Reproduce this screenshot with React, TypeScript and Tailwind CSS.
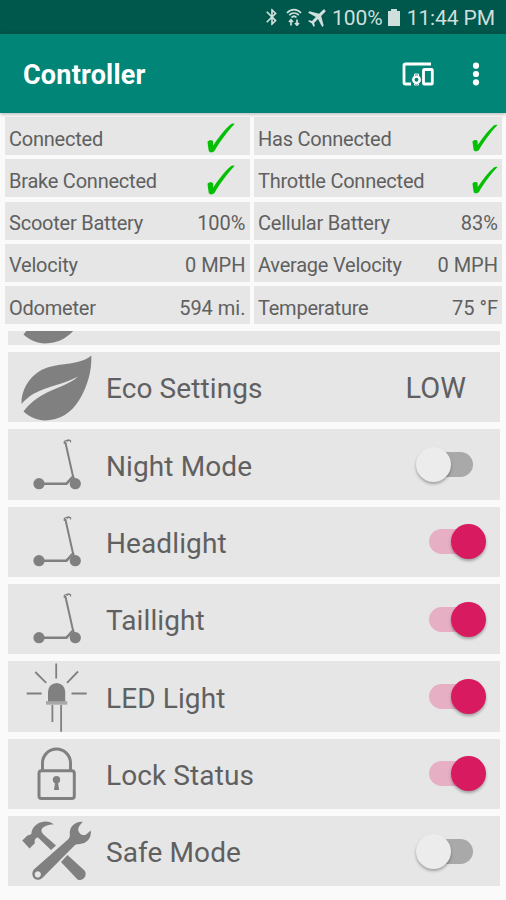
import { clsx } from "clsx";
import { type ReactNode, useState } from "react";
import { MdAirplanemodeActive, MdBluetooth } from "react-icons/md";

const leftStats = [
  { label: "Connected", value: true },
  { label: "Brake Connected", value: true },
  { label: "Scooter Battery", value: "100%" },
  { label: "Velocity", value: "0 MPH" },
  { label: "Odometer", value: "594 mi." },
]

const rightStats = [
  { label: "Has Connected", value: true },
  { label: "Throttle Connected", value: true },
  { label: "Cellular Battery", value: "83%" },
  { label: "Average Velocity", value: "0 MPH" },
  { label: "Temperature", value: "75 °F" },
]

const settings = [
  { name: "Night Mode", icon: <ScooterIcon />, enabled: false },
  { name: "Headlight", icon: <ScooterIcon />, enabled: true },
  { name: "Taillight", icon: <ScooterIcon />, enabled: true },
  { name: "LED Light", icon: <LedIcon />, enabled: true },
  { name: "Lock Status", icon: <LockIcon />, enabled: true },
  { name: "Safe Mode", icon: <ToolsIcon />, enabled: false },
]

function Icon({ children }: { children: ReactNode }) {
  return (
    <svg viewBox="0 0 71 70" className="w-[71px] h-[70px] shrink-0 text-[#808080]" fill="none">
      {children}
    </svg>
  )
}

function LeafIcon() {
  return (
    <Icon>
      <path
        fill="currentColor"
        d="M70.300 3.500C65 8.500 56 10.500 45 12C34 13.500 26 14.500 18 19.500C8 26 0 38 .5 52C4 48 8 44.500 13 41.500C27 34 44 32 57 24.500C49 32 36 35.500 26 40.500C16 45.500 8 52 2.500 59.500C10 66.500 19 69.500 29 68C44 66.500 54 56 60 45C66 34 71 19.500 70.300 3.500Z"
      />
    </Icon>
  )
}

function ScooterIcon() {
  return (
    <Icon>
      <g stroke="currentColor" strokeWidth="2">
        <path d="M18 53.700H45.500L52.500 46" strokeWidth="2.600" />
        <path d="M54 53L51.500 44L44.300 12" strokeWidth="2" />
        <path d="M43.300 14V11.500L46.500 10L49.500 10.500V12.500M46 11.500L48.500 9.500" strokeWidth="1.200" />
      </g>
      <circle cx="18" cy="53.700" r="5.600" fill="currentColor" />
      <circle cx="54.300" cy="53.700" r="5.600" fill="currentColor" />
    </Icon>
  )
}

function LedIcon() {
  return (
    <Icon>
      <path
        stroke="currentColor"
        strokeWidth="1.800"
        d="M35.200 1.500V16.500M14.300 10L25.200 20.800M57 9.500L46 20.800M5.700 31.500H20.700M50.500 31.500H65.700M31.400 43V60M40.100 43V69.800"
      />
      <path fill="currentColor" d="M27 40V29.500A8.600 8.600 0 0 1 44.200 29.500V40Z" />
      <rect x="25" y="39.200" width="21.300" height="3.500" fill="#a8a8a8" />
    </Icon>
  )
}

function LockIcon() {
  return (
    <Icon>
      <g stroke="currentColor" strokeWidth="3">
        <rect x="18" y="31.700" width="35.300" height="27.800" rx="2.500" />
        <path d="M21.500 31V24A14 14 0 0 1 49.500 24V31" />
      </g>
      <circle cx="35.500" cy="40.800" r="3.700" fill="currentColor" />
      <path fill="currentColor" d="M34.300 42H36.800L38.100 51H33Z" />
    </Icon>
  )
}

function ToolsIcon() {
  return (
    <Icon>
      <path
        fill="currentColor"
        d="M1.200 24.500L7 19C8 19.500 9 19 10.500 17.500C10.500 13 14 8 20 6.200C25 4.800 30 5.800 32.800 8.500C27 8.500 22.500 10 20.500 13.500C20.300 15.500 21 17 22.500 18.500L35 29.500L30 34L17 21.500C15 21.500 14 23 13.500 25.500L14 27L8.500 32.500Z"
      />
      <path fill="currentColor" d="M46.500 39L63.500 54.500C67 59 62 66 56.500 63.500L40 46Z" />
      <path
        fill="currentColor"
        fillRule="evenodd"
        d="M61.800 5.700C54 5 48 11 48.800 18C49 20 48.800 21.500 47.500 23L12.800 53.500C8.500 59.500 14.500 67 20.800 62.500L53.500 29.500C55 28.200 56.500 28.300 59 28C66 27.500 71 21.500 69.700 14.500L64.800 18.700C61.500 20.200 57.500 17.500 57.200 13.500C57.200 10.500 59.500 8.500 61.800 5.700ZM16.800 55.300A3.100 3.100 0 1 1 16.790 55.300Z"
      />
    </Icon>
  )
}

function CheckIcon({ className }: { className?: string }) {
  return (
    <svg viewBox="0 0 28 30" className={clsx("shrink-0", className)}>
      <path
        fill="#04bf04"
        d="M27.500 1C21 8 13 18 7.500 28C6 29.700 2.500 30 1.800 28C1.300 25 .8 22 .5 18.800C1.500 17 5 16.500 6 18.200L6.200 22.500C11.500 14.500 17.500 6.500 23.500 1.500C24.500.6 26.500.3 27.500 1Z"
      />
    </svg>
  )
}

function StatColumn({ stats, checkClass, className }: { stats: typeof leftStats, checkClass: string, className: string }) {
  return (
    <div className={clsx("flex flex-col gap-[4.250px]", className)}>
      {stats.map((stat) => (
        <div key={stat.label} className="flex items-center justify-between h-[38px] bg-[#e6e6e6] pl-[4.500px] pr-1 text-[20px] text-[#606060]">
          <span className="pt-[5px] tracking-[-0.230px]">{stat.label}</span>
          {stat.value === true ? <CheckIcon className={checkClass} /> : <span className="pt-[5px]">{stat.value}</span>}
        </div>
      ))}
    </div>
  )
}

function Toggle({ initial, label }: { initial: boolean, label: string }) {
  const [on, setOn] = useState(initial)

  return (
    <button
      role="switch"
      aria-checked={on}
      aria-label={label}
      onClick={() => setOn(!on)}
      className={clsx("flex items-center w-[52px] h-[25px] rounded-full", on ? "bg-[#e6afc3] mr-[19.500px] justify-end" : "bg-[#a9a9a9] mr-[27.500px]")}
    >
      <span
        className={clsx(
          "size-[35px] shrink-0 rounded-full shadow-[0_2px_3px_rgba(0,0,0,0.3)]",
          on ? "bg-[#d81b60] -mr-[5px]" : "bg-[#ececec] -ml-[5px]"
        )}
      />
    </button>
  )
}

function SettingRow({ name, icon, children }: { name?: string, icon: ReactNode, children?: ReactNode }) {
  return (
    <div className="flex items-center h-[70.350px] shrink-0 bg-[#e6e6e6] pl-[13px]">
      {icon}
      <span className="flex-1 pl-[14px] pt-1 text-[28px] tracking-[0.100px] text-[#606060]">{name}</span>
      {children}
    </div>
  )
}

export default function App() {
  return (
    <div className="flex flex-col w-[506px] h-[900px] overflow-hidden bg-[#fafafa] font-['Roboto',sans-serif]">
      <div className="flex items-center justify-end h-[34px] shrink-0 bg-[#00574b] pr-[11px] text-[#cfdfdc]">
        <MdBluetooth size={20} className="mr-1" />
        <svg viewBox="0 0 16 18" className="w-4 h-[18px] mr-1" fill="none" stroke="currentColor" strokeWidth="1.700">
          <path d="M1 5C5 .5 11 .5 15 5M3.200 7.200C6 4.500 10 4.500 12.800 7.200M5.500 9.500C7 8 9 8 10.500 9.500" />
          <path d="M5 17.500V12M3 14L5 11.800L7 14M11 11.500V17M9 15L11 17.200L13 15" />
        </svg>
        <MdAirplanemodeActive size={24} className="rotate-45 mr-0.5" />
        <span className="pt-[3px] text-[21px]">100%</span>
        <svg viewBox="0 0 12 17" className="w-3 h-[17px] ml-[5px] mr-[7px]" fill="currentColor">
          <path d="M3 0H9V2H12V17H0V2H3Z" />
        </svg>
        <span className="pt-[3px] text-[21px] tracking-[-0.100px]">11:44 PM</span>
      </div>

      <header className="relative flex items-center h-[79px] shrink-0 bg-[#008577] pl-[23px] pr-[26px] text-white shadow-[0_1px_4px_rgba(0,0,0,0.3)]">
        <h1 className="flex-1 text-[27px] font-bold tracking-[0.200px] pt-1">Controller</h1>
        <svg viewBox="0 0 32 24" className="w-8 h-6 mr-[38px]" fill="none" stroke="currentColor" strokeWidth="2.800">
          <path d="M29 2H3.500Q2 2 2 3.500V20.500Q2 22 3.500 22H9" />
          <circle cx="14.500" cy="17.700" r="3.200" strokeWidth="2.500" />
          <path d="M12.500 14V12H16.500V14M12.500 21.500V23H16.500V21.500" strokeWidth="1" />
          <rect x="21.500" y="7.500" width="8.800" height="14.500" rx="0.800" />
        </svg>
        <svg viewBox="0 0 8 24" className="w-2 h-6" fill="currentColor">
          <circle cx="4" cy="3.700" r="3.100" />
          <circle cx="4" cy="12" r="3.100" />
          <circle cx="4" cy="20.300" r="3.100" />
        </svg>
      </header>

      <div className="flex gap-1 pt-1 pl-[4.500px] pr-1 shrink-0">
        <StatColumn stats={leftStats} className="w-[245px]" checkClass="w-7 h-[30px] mr-[11px] mt-1" />
        <StatColumn stats={rightStats} className="flex-1" checkClass="w-[26px] h-7 mt-1" />
      </div>

      <main className="flex flex-col flex-1 min-h-0 mt-[7px] pl-2 pr-1.5 overflow-hidden">
        <div className="flex flex-col gap-[7px] -mt-[56.350px]">
          {/* row scrolled under the stats, only its lower edge shows */}
          <SettingRow icon={<LeafIcon />} />
          <SettingRow name="Eco Settings" icon={<LeafIcon />}>
            <span className="pr-[34px] pt-1 text-[29px] text-[#606060]">LOW</span>
          </SettingRow>
          {settings.map((setting) => (
            <SettingRow key={setting.name} name={setting.name} icon={setting.icon}>
              <Toggle initial={setting.enabled} label={setting.name} />
            </SettingRow>
          ))}
        </div>
      </main>
    </div>
  )
}
